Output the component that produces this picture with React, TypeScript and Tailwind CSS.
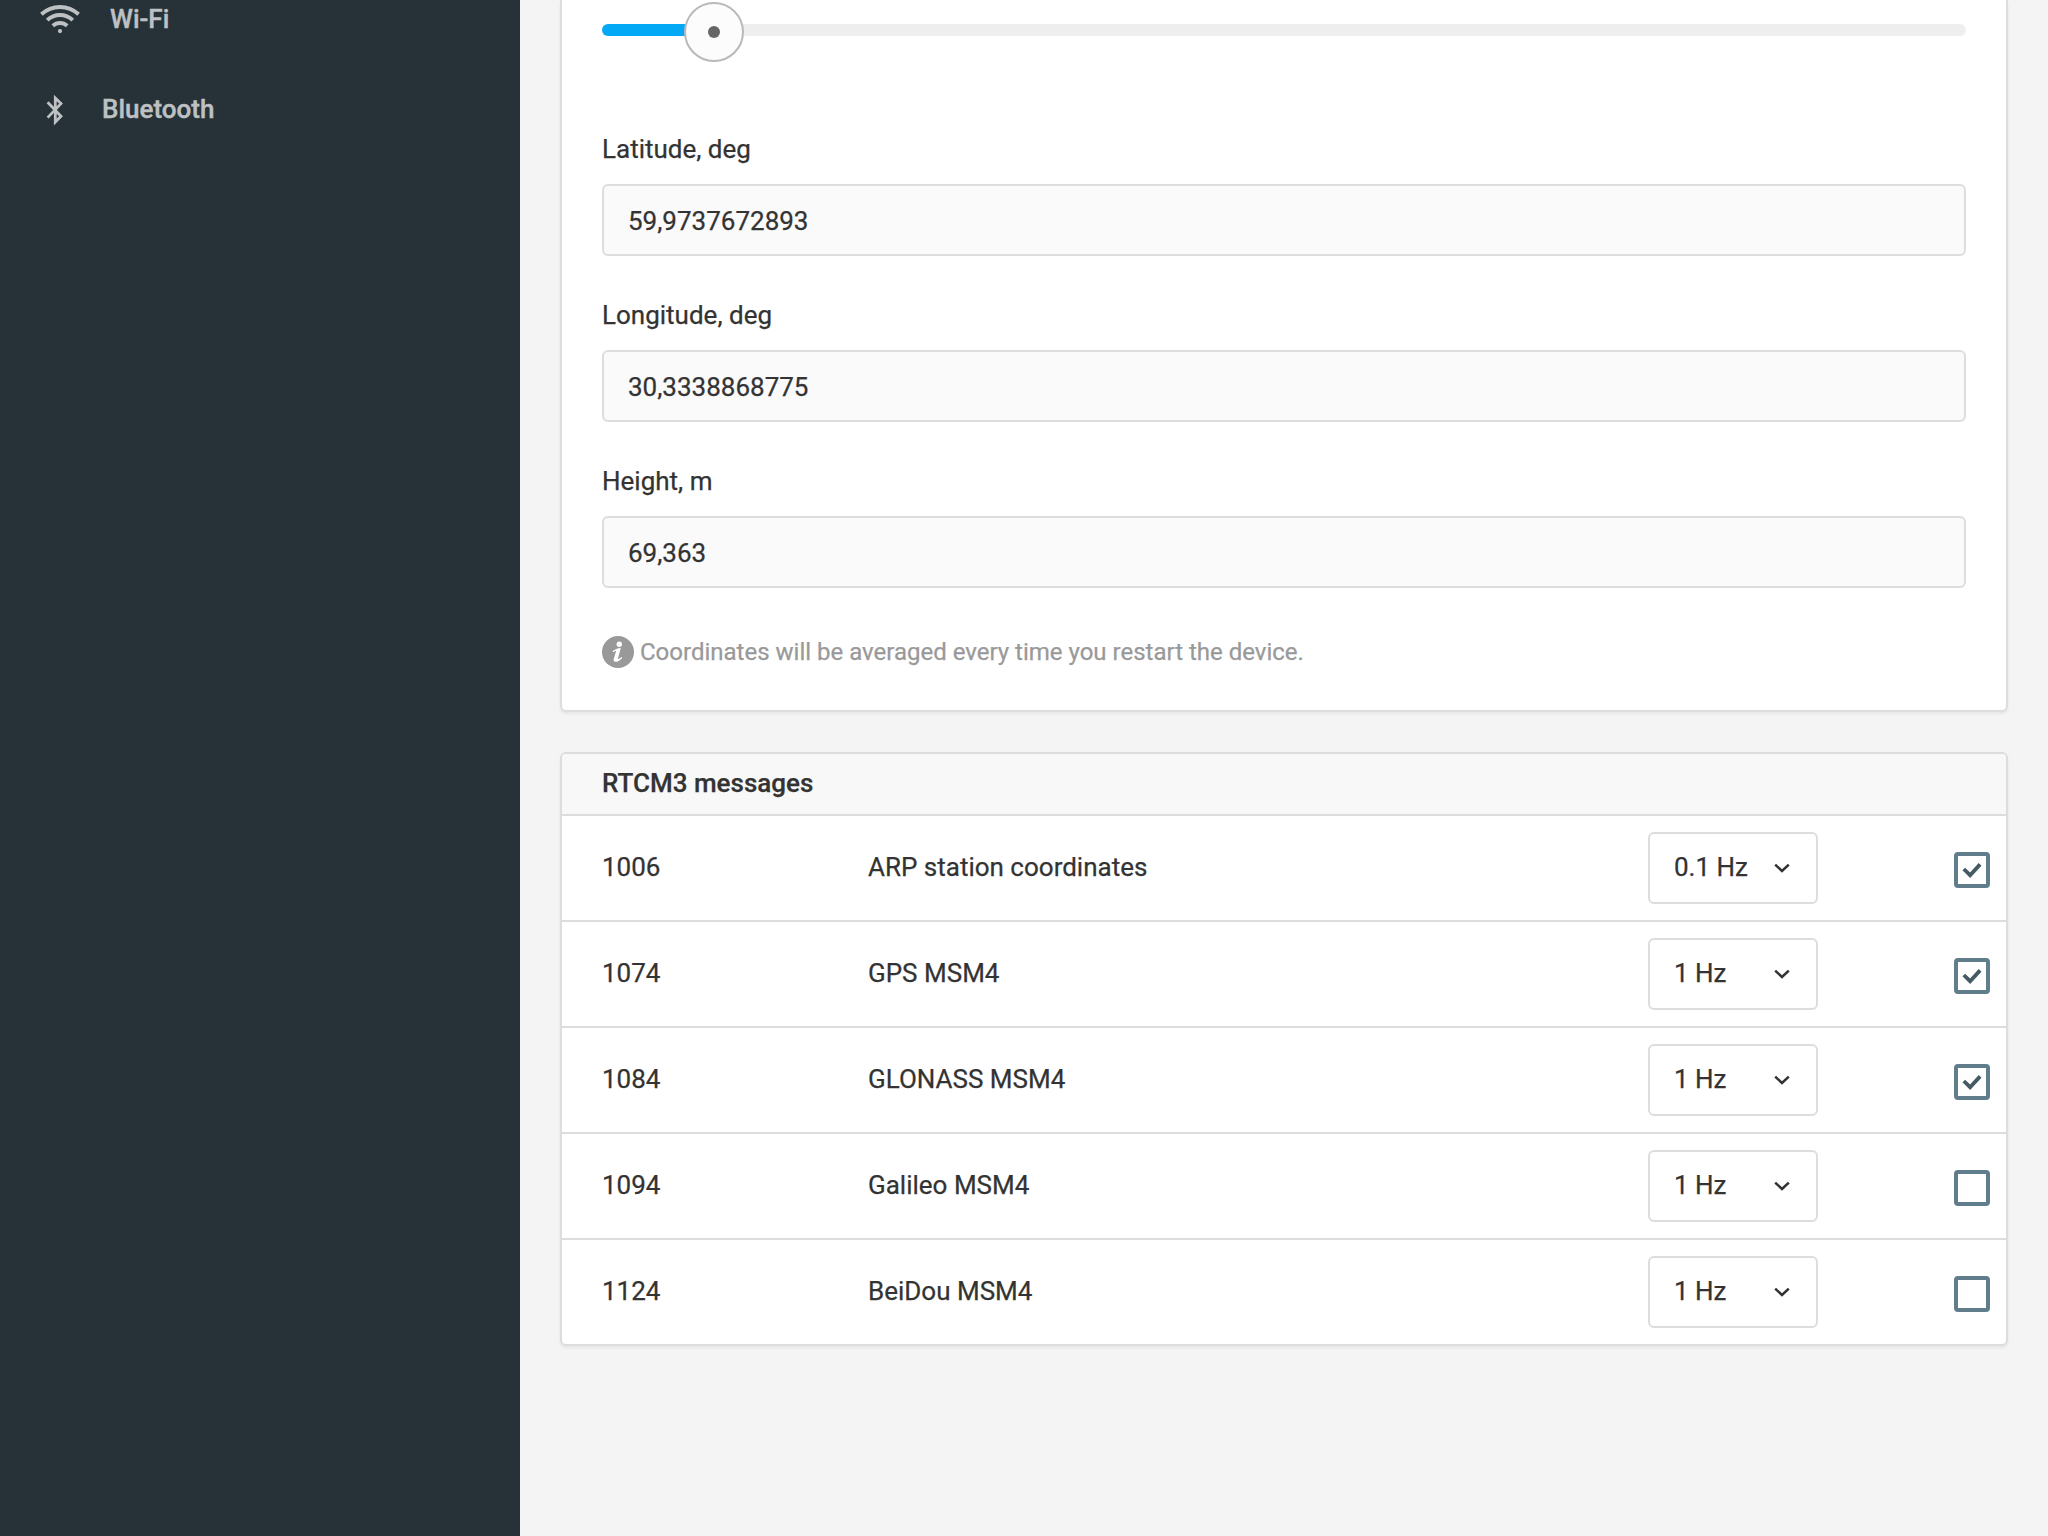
const fields = [
  { label: 'Latitude, deg', value: '59,9737672893' },
  { label: 'Longitude, deg', value: '30,3338868775' },
  { label: 'Height, m', value: '69,363' },
];

const messages = [
  { id: '1006', name: 'ARP station coordinates', rate: '0.1 Hz', on: true },
  { id: '1074', name: 'GPS MSM4', rate: '1 Hz', on: true },
  { id: '1084', name: 'GLONASS MSM4', rate: '1 Hz', on: true },
  { id: '1094', name: 'Galileo MSM4', rate: '1 Hz', on: false },
  { id: '1124', name: 'BeiDou MSM4', rate: '1 Hz', on: false },
];

function WifiIcon() {
  return (
    <svg width="40" height="30" viewBox="0 0 40 30" fill="none" stroke="currentColor" strokeWidth="3.9">
      <path d="M1.4 10.3C12 .5 28 .5 38.6 10.3" />
      <path d="M7.2 16.1C14.5 9.3 25.5 9.3 32.8 16.1" />
      <path d="M12.8 21.8C17 18 23 18 27.2 21.8" />
      <circle cx="20" cy="27.1" r="2.1" fill="currentColor" stroke="none" />
    </svg>
  );
}

function BluetoothIcon() {
  return (
    <svg width="18" height="32" viewBox="0 0 18 32" fill="none" stroke="currentColor" strokeWidth="2.8" className="mt-0.5">
      <path d="M1.6 8.2L15 22.2L9.3 28V4L15 9.6L1.6 23.6" />
    </svg>
  );
}

function InfoIcon() {
  return (
    <svg width="32" height="32" viewBox="0 0 32 32" className="shrink-0">
      <circle cx="16" cy="16" r="16" fill="#999999" />
      <circle cx="17.3" cy="8.2" r="2.7" fill="#fff" />
      <path
        d="M10.6 15.3C13 13.2 15.6 12 18.8 11.9L16 22.2C15.7 23.4 16.4 23.2 19.4 20.9L20.2 21.9C17.5 24.8 15.3 25.9 13.5 25.8C11.8 25.7 11.3 24.5 11.8 22.8L14 15.4C14.2 14.6 13.3 14.8 11.3 16.3Z"
        fill="#fff"
      />
    </svg>
  );
}

function Checkbox({ on }: { on: boolean }) {
  return (
    <span className="mt-1 flex size-9 items-center justify-center rounded-[4px] border-4 border-[#607d8b]">
      {on && (
        <svg width="28" height="28" viewBox="0 0 28 28" fill="none" stroke="#455a64" strokeWidth="3.8" className="shrink-0">
          <path d="M5.8 13L12.1 19.2L22.1 8.4" />
        </svg>
      )}
    </span>
  );
}

export default function App() {
  return (
    <div className="flex h-[1536px] w-[2048px] overflow-hidden bg-[#f4f4f4] font-['Roboto',sans-serif] text-[26px] leading-[30px] text-[#333333] [-webkit-text-stroke:0.25px_currentColor]">
      <aside className="w-[520px] shrink-0 bg-[#263238] font-medium text-[#bec1c3] [-webkit-text-stroke:0.4px_currentColor]">
        <div className="flex h-[38px] items-center pl-10">
          <WifiIcon />
          <span className="pl-[30px]">Wi-Fi</span>
        </div>
        <div className="mt-[52px] flex h-[38px] items-center pl-[46px]">
          <BluetoothIcon />
          <span className="pl-[38px]">Bluetooth</span>
        </div>
      </aside>

      <main className="flex flex-1 flex-col gap-10 px-10">
        <section className="h-[712px] rounded-b-[6px] border-2 border-t-0 border-[#dddddd] bg-white px-10 shadow-[0_2px_3px_rgba(0,0,0,0.06)]">
          <div className="relative mt-6 h-3 rounded-full bg-[#eeeeee]">
            <div className="h-3 w-[112px] rounded-full bg-[#03a9f4]" />
            <div className="absolute -top-[22px] left-[82px] flex size-[60px] items-center justify-center rounded-full border-2 border-[#b9b9b9] bg-[#fcfcfc]">
              <span className="size-3 rounded-full bg-[#666666]" />
            </div>
          </div>
          <div className="mt-[98px] flex flex-col gap-11">
            {fields.map((f) => (
              <label key={f.label} className="flex h-[122px] flex-col justify-between">
                <span className="h-[30px]">{f.label}</span>
                <span className="flex h-[72px] items-center rounded-[6px] border-2 border-[#dddddd] bg-[#fafafa] px-6 pt-0.5">
                  {f.value}
                </span>
              </label>
            ))}
          </div>
          <div className="mt-12 flex h-8 items-center text-[24px] text-[#999999]">
            <InfoIcon />
            <span className="pl-1.5">Coordinates will be averaged every time you restart the device.</span>
          </div>
        </section>

        <section className="rounded-[6px] border-2 border-[#dddddd] bg-white shadow-[0_2px_3px_rgba(0,0,0,0.06)]">
          <h2 className="flex h-[62px] items-center rounded-t-[4px] border-b-2 border-[#dddddd] bg-[#f8f8f8] px-10 pb-0.5 font-medium">
            RTCM3 messages
          </h2>
          {messages.map((m) => (
            <div
              key={m.id}
              className="grid h-[106px] grid-cols-[266px_780px_1fr_36px] items-center border-b-2 border-[#dddddd] pr-4 pl-10 last:h-[104px] last:border-b-0"
            >
              <span className="pb-0.5">{m.id}</span>
              <span className="pb-0.5">{m.name}</span>
              <span className="flex h-[72px] w-[170px] items-center justify-between rounded-[6px] border-2 border-[#dddddd] pr-[25px] pl-6">
                <span className="pb-0.5">{m.rate}</span>
                <svg width="18" height="12" viewBox="0 0 18 12" fill="none" stroke="#333333" strokeWidth="2.5">
                  <path d="M2.2 2.6L9 9L15.8 2.6" />
                </svg>
              </span>
              <Checkbox on={m.on} />
            </div>
          ))}
        </section>
      </main>
    </div>
  );
}
